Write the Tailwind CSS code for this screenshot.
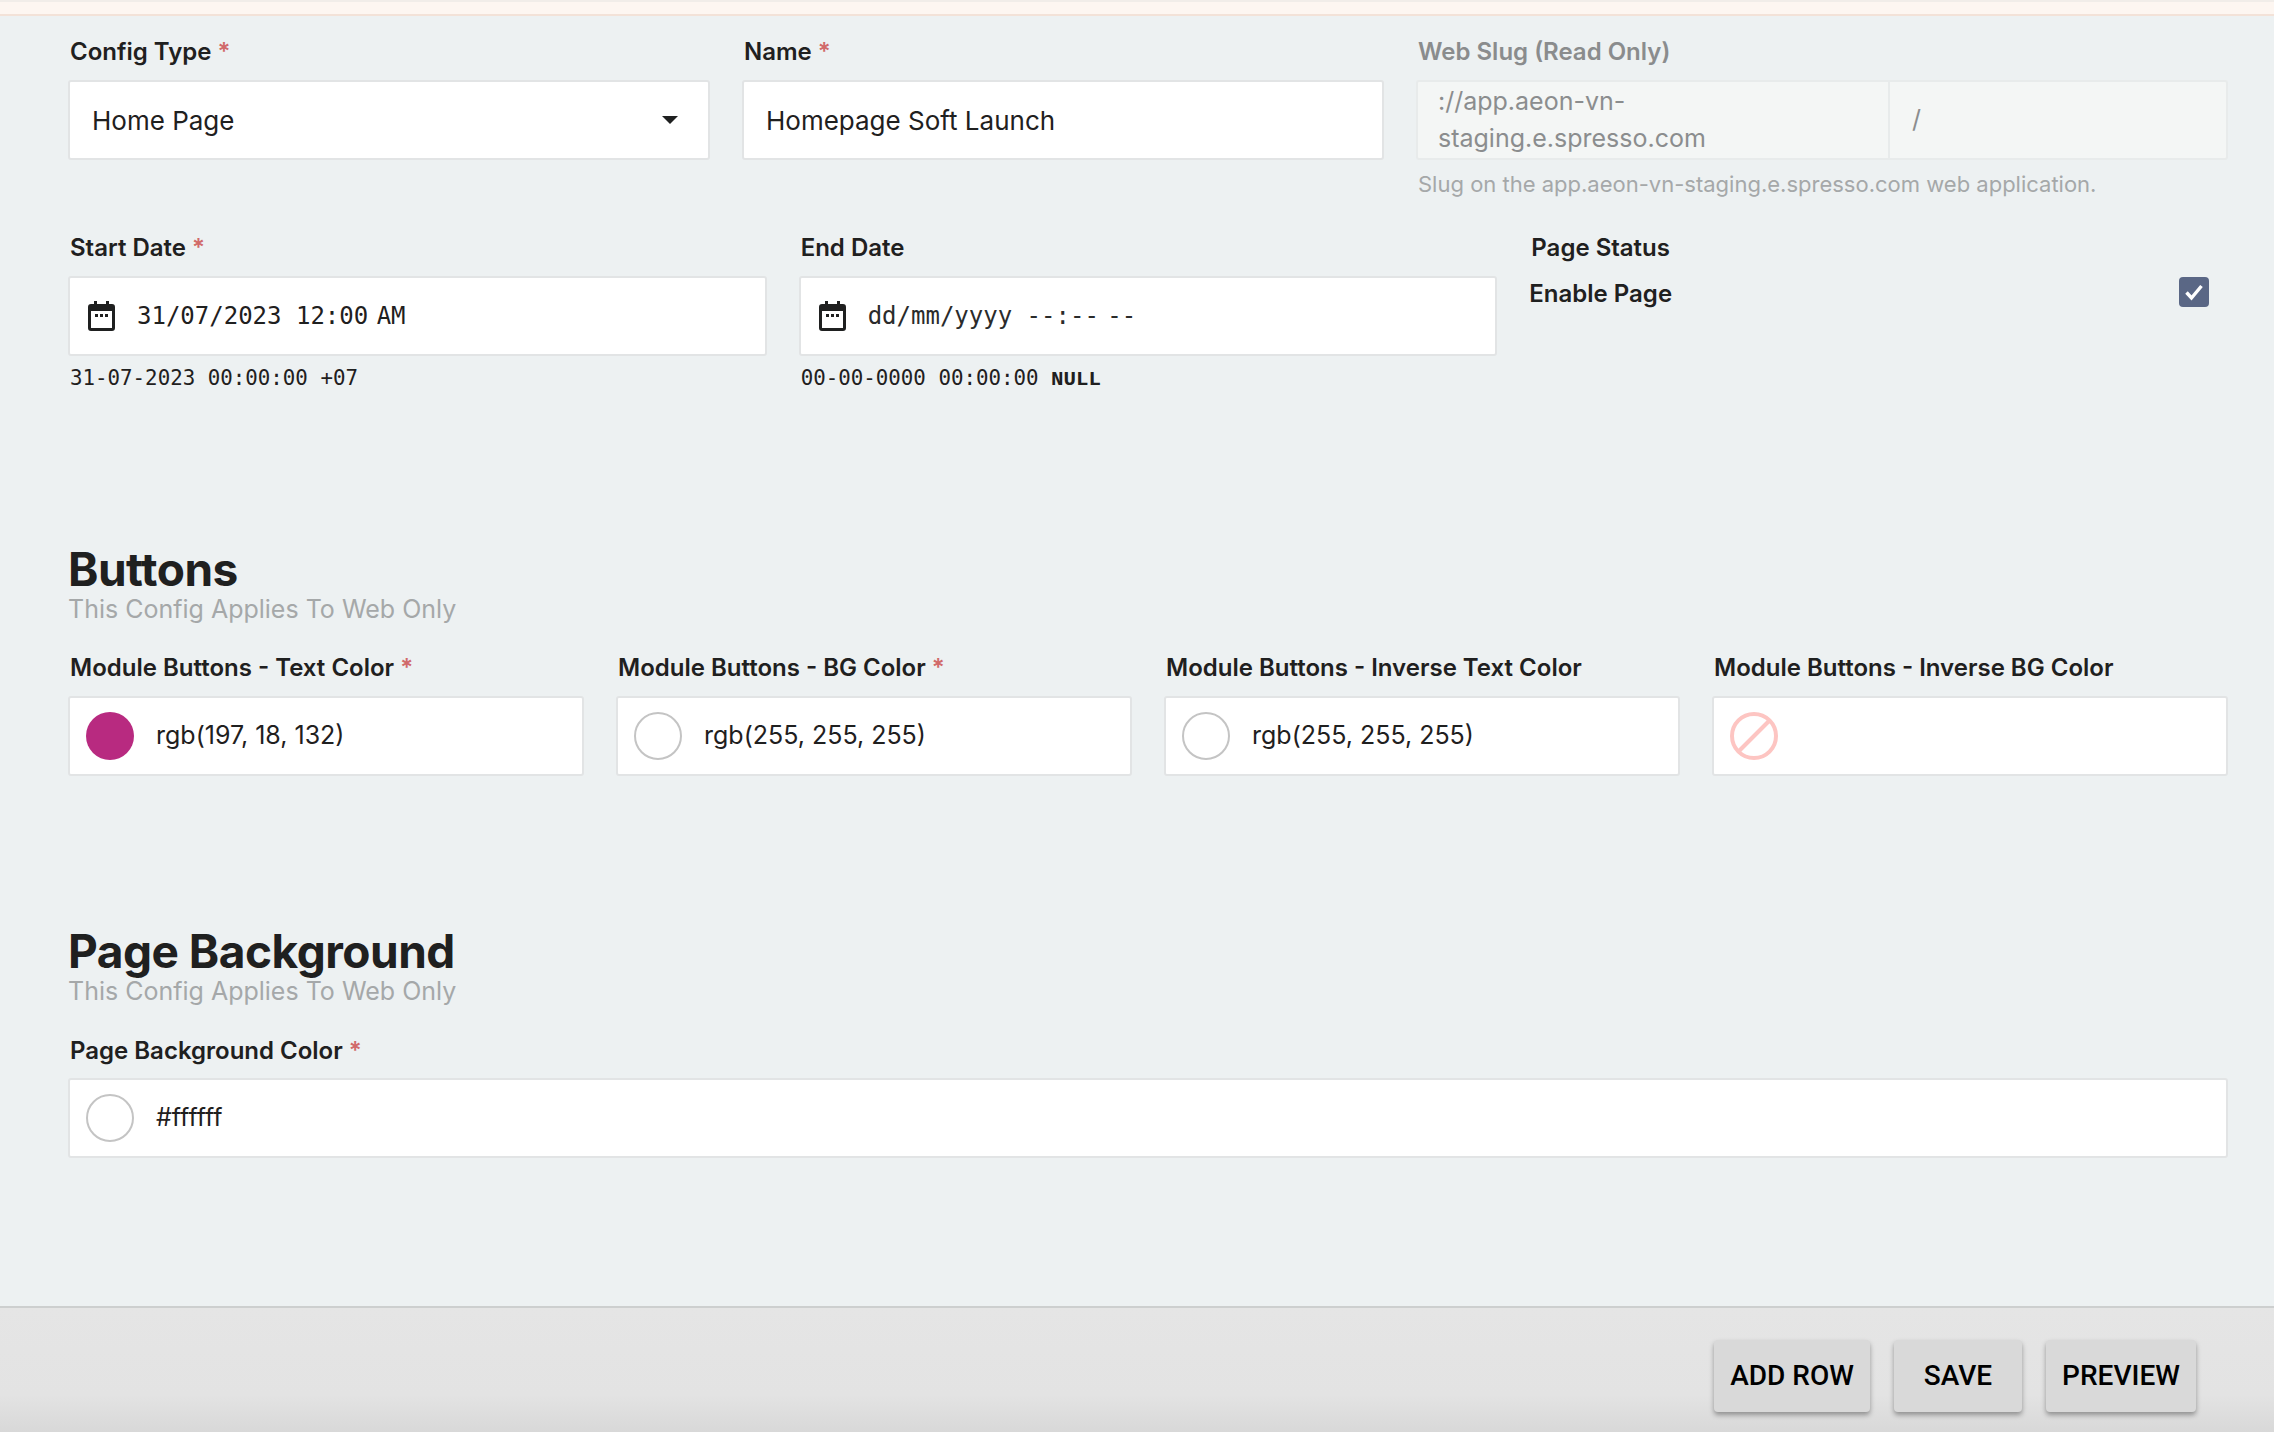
<!DOCTYPE html>
<html><head><meta charset="utf-8"><script src="https://cdn.jsdelivr.net/npm/@tailwindcss/browser@4"></script></head>
<body class="m-0">
<div class="flex flex-col w-[2274px] h-[1432px] overflow-hidden bg-[#edf1f2] text-[#1f2020] font-['Inter',sans-serif]">
  <div class="h-[16px] shrink-0 bg-[#fdf6f1] border-b-2 border-[#f3e2d8] border-t-2 border-t-[#f1ede9]"></div>
  <main class="flex-1 pl-[68px] pr-[46px] pt-[18px]">
    <div class="grid grid-cols-[642px_642px_812px] gap-x-[32px]">
      <div>
        <div class="h-[36px] leading-[36px] mb-[10px] pl-[2px] text-[24px] font-semibold">Config Type <span class="text-[#d16a6a]">*</span></div>
        <div class="h-[80px] bg-white border-2 border-[#e2e4e5] rounded-[3px] flex items-center justify-between pl-[22px] pr-[30px] text-[26px]">
          <span>Home Page</span>
          <svg width="16" height="8" viewBox="0 0 16 8"><path d="M0 0H16L8 8Z" fill="#1f2020"/></svg>
        </div>
      </div>
      <div>
        <div class="h-[36px] leading-[36px] mb-[10px] pl-[2px] text-[24px] font-semibold">Name <span class="text-[#d16a6a]">*</span></div>
        <div class="h-[80px] bg-white border-2 border-[#e2e4e5] rounded-[3px] flex items-center pl-[22px] text-[26px]">Homepage Soft Launch</div>
      </div>
      <div>
        <div class="h-[36px] leading-[36px] mb-[10px] pl-[2px] text-[24px] font-semibold text-[#8a8c8d]">Web Slug (Read Only)</div>
        <div class="h-[80px] bg-[#f4f6f5] border-2 border-[#e8ebeb] rounded-[3px] flex items-center text-[25px] text-[#8b8d8e]">
          <div class="h-full w-[472px] shrink-0 border-r-2 border-[#e8ebeb] flex items-center pl-[20px]">://app.aeon-vn-staging.e.spresso.com</div>
          <div class="pl-[22px]">/</div>
        </div>
        <div class="h-[30px] leading-[30px] mt-[9px] pl-[2px] text-[22px] text-[#a5a8a9]">Slug on the app.aeon-vn-staging.e.spresso.com web application.</div>
      </div>
    </div>

    <div class="grid grid-cols-3 gap-x-[32px] mt-[31px]">
      <div>
        <div class="h-[36px] leading-[36px] mb-[10px] pl-[2px] text-[24px] font-semibold">Start Date <span class="text-[#d16a6a]">*</span></div>
        <div class="h-[80px] bg-white border-2 border-[#e2e4e5] rounded-[3px] flex items-center pl-[18px] gap-[22px] font-['DejaVu_Sans_Mono',monospace] text-[24px]">
          <svg width="27" height="30" viewBox="0 0 27 30"><path d="M6 0h3v3h9V0h3v3h3a3 3 0 0 1 3 3v21a3 3 0 0 1-3 3H3a3 3 0 0 1-3-3V6a3 3 0 0 1 3-3h3Z" fill="#1f2020"/><rect x="3" y="10" width="21" height="17" fill="#fff"/><rect x="7" y="13" width="3" height="3" fill="#1f2020"/><rect x="12" y="13" width="3" height="3" fill="#1f2020"/><rect x="17" y="13" width="3" height="3" fill="#1f2020"/></svg>
          <span>31/07/2023 <span class="[word-spacing:-6px]">12:00 AM</span></span>
        </div>
        <div class="h-[30px] leading-[30px] mt-[7px] pl-[2px] font-['DejaVu_Sans_Mono',monospace] text-[20.8px]">31-07-2023 00:00:00 +07</div>
      </div>
      <div>
        <div class="h-[36px] leading-[36px] mb-[10px] pl-[2px] text-[24px] font-semibold">End Date</div>
        <div class="h-[80px] bg-white border-2 border-[#e2e4e5] rounded-[3px] flex items-center pl-[18px] gap-[22px] font-['DejaVu_Sans_Mono',monospace] text-[24px] text-[#2a2b2b]">
          <svg width="27" height="30" viewBox="0 0 27 30"><path d="M6 0h3v3h9V0h3v3h3a3 3 0 0 1 3 3v21a3 3 0 0 1-3 3H3a3 3 0 0 1-3-3V6a3 3 0 0 1 3-3h3Z" fill="#1f2020"/><rect x="3" y="10" width="21" height="17" fill="#fff"/><rect x="7" y="13" width="3" height="3" fill="#1f2020"/><rect x="12" y="13" width="3" height="3" fill="#1f2020"/><rect x="17" y="13" width="3" height="3" fill="#1f2020"/></svg>
          <span>dd/mm/yyyy <span class="[word-spacing:-6px]">--:-- --</span></span>
        </div>
        <div class="h-[30px] leading-[30px] mt-[7px] pl-[2px] font-['DejaVu_Sans_Mono',monospace] text-[20.8px]">00-00-0000 00:00:00 <span class="font-['Liberation_Mono',monospace] font-bold">NULL</span></div>
      </div>
      <div>
        <div class="h-[36px] leading-[36px] pl-[2px] text-[24px] font-semibold">Page Status</div>
        <div class="flex items-center justify-between mt-[10px] h-[36px] pr-[19px]">
          <span class="text-[24px] font-semibold">Enable Page</span>
          <span class="w-[30px] h-[30px] -mt-[4px] rounded-[4px] bg-[#5a6785] flex items-center justify-center">
            <svg width="20" height="18" viewBox="0 0 20 18"><path d="M2.5 9.5L7.5 15L17.5 3" fill="none" stroke="#fff" stroke-width="3.4"/></svg>
          </span>
        </div>
      </div>
    </div>

    <div class="mt-[148px] h-[56px] leading-[56px] text-[46px] font-bold tracking-[-0.5px]">Buttons</div>
    <div class="-mt-[3px] h-[30px] leading-[30px] text-[25px] text-[#a5a8a9]">This Config Applies To Web Only</div>
    <div class="grid grid-cols-4 gap-x-[32px] mt-[26px]">
      <div>
        <div class="h-[36px] leading-[36px] mb-[10px] pl-[2px] text-[24px] font-semibold">Module Buttons - Text Color <span class="text-[#d16a6a]">*</span></div>
        <div class="h-[80px] bg-white border-2 border-[#e2e4e5] rounded-[3px] flex items-center pl-[16px] gap-[22px] text-[25px]">
          <span class="w-[48px] h-[48px] rounded-full bg-[#b82a80]"></span><span>rgb(197, 18, 132)</span>
        </div>
      </div>
      <div>
        <div class="h-[36px] leading-[36px] mb-[10px] pl-[2px] text-[24px] font-semibold">Module Buttons - BG Color <span class="text-[#d16a6a]">*</span></div>
        <div class="h-[80px] bg-white border-2 border-[#e2e4e5] rounded-[3px] flex items-center pl-[16px] gap-[22px] text-[25px]">
          <span class="w-[48px] h-[48px] rounded-full bg-white border-2 border-[#c4c4c4]"></span><span>rgb(255, 255, 255)</span>
        </div>
      </div>
      <div>
        <div class="h-[36px] leading-[36px] mb-[10px] pl-[2px] text-[24px] font-semibold">Module Buttons - Inverse Text Color</div>
        <div class="h-[80px] bg-white border-2 border-[#e2e4e5] rounded-[3px] flex items-center pl-[16px] gap-[22px] text-[25px]">
          <span class="w-[48px] h-[48px] rounded-full bg-white border-2 border-[#c4c4c4]"></span><span>rgb(255, 255, 255)</span>
        </div>
      </div>
      <div>
        <div class="h-[36px] leading-[36px] mb-[10px] pl-[2px] text-[24px] font-semibold">Module Buttons - Inverse BG Color</div>
        <div class="h-[80px] bg-white border-2 border-[#e2e4e5] rounded-[3px] flex items-center pl-[16px]">
          <svg width="48" height="48" viewBox="0 0 48 48"><circle cx="24" cy="24" r="22" fill="none" stroke="#fdc5c2" stroke-width="4"/><path d="M9 39L39 9" stroke="#fdc5c2" stroke-width="4"/></svg>
        </div>
      </div>
    </div>

    <div class="mt-[147px] h-[56px] leading-[56px] text-[46px] font-bold tracking-[-0.5px]">Page Background</div>
    <div class="-mt-[3px] h-[30px] leading-[30px] text-[25px] text-[#a5a8a9]">This Config Applies To Web Only</div>
    <div class="mt-[27px] h-[36px] leading-[36px] mb-[9px] pl-[2px] text-[24px] font-semibold">Page Background Color <span class="text-[#d16a6a]">*</span></div>
    <div class="h-[80px] bg-white border-2 border-[#e2e4e5] rounded-[3px] flex items-center pl-[16px] gap-[22px] text-[25px]">
      <span class="w-[48px] h-[48px] rounded-full bg-white border-2 border-[#c4c4c4]"></span><span>#ffffff</span>
    </div>
  </main>
  <footer class="h-[126px] shrink-0 border-t-2 border-[#cdcfcf] bg-[linear-gradient(180deg,#e5e5e5_0%,#e3e3e3_70%,#d8d8d8_100%)] flex items-start justify-end gap-[24px] pt-[32px] pr-[78px] font-['Roboto',sans-serif]">
    <button class="h-[72px] w-[156px] rounded-[4px] bg-[#d9d9d9] text-black text-[28px] font-medium shadow-[0_3px_5px_rgba(0,0,0,0.35)]">ADD ROW</button>
    <button class="h-[72px] w-[128px] rounded-[4px] bg-[#d9d9d9] text-black text-[28px] font-medium shadow-[0_3px_5px_rgba(0,0,0,0.35)]">SAVE</button>
    <button class="h-[72px] w-[150px] rounded-[4px] bg-[#d9d9d9] text-black text-[28px] font-medium shadow-[0_3px_5px_rgba(0,0,0,0.35)]">PREVIEW</button>
  </footer>
</div>
</body></html>
